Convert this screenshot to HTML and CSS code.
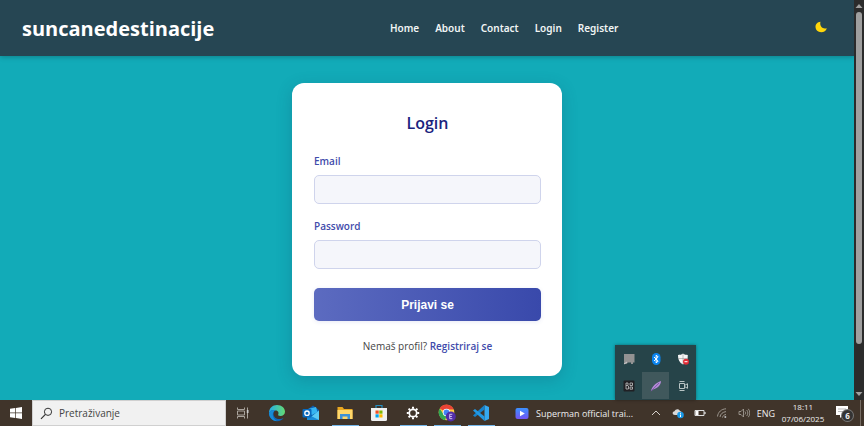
FILE: index.html
```html
<!DOCTYPE html>
<html lang="hr">
<head>
<meta charset="utf-8">
<title>suncanedestinacije – Login</title>
<link rel="stylesheet" href="styles.css">
</head>
<body>
<div class="window">
  <div class="page">
    <header class="header">
      <div class="brand">suncanedestinacije</div>
      <nav class="nav">
        <a href="#">Home</a><a href="#">About</a><a href="#">Contact</a><a href="#">Login</a><a href="#">Register</a>
      </nav>
      <button class="theme" type="button" aria-label="Dark mode">
        <svg width="12" height="12" viewBox="0 0 12 12"><path d="M5.500 .8C2.300 1 .4 3.200 .5 6c.1 3 2.500 5.200 5.700 5.200 2.800 0 4.900-1.400 5.600-4-2.200.6-4.300.2-5.500-1.400C5.200 4.400 5 2.500 5.500 .8z" fill="#ffd60a"/></svg>
      </button>
    </header>
    <main class="main">
      <form class="card">
        <h1>Login</h1>
        <label for="email">Email</label>
        <input id="email" type="email">
        <label for="password">Password</label>
        <input id="password" type="password">
        <button class="submit" type="button">Prijavi se</button>
        <p>Nemaš profil? <a href="#">Registriraj se</a></p>
      </form>
    </main>
  </div>
  <div class="scrollbar">
    <svg width="8" height="12" viewBox="0 0 8 12"><path d="M4 4l3.500 4h-7z" fill="#a0a0a0"/></svg>
    <div class="thumb"></div>
    <svg width="8" height="12" viewBox="0 0 8 12"><path d="M4 8l3.500-4h-7z" fill="#a0a0a0"/></svg>
  </div>
  <div class="tray">
    <span><svg width="12" height="12" viewBox="0 0 12 12"><path d="M1 1h10.500v8.500H10V11H8V9.500H5L3.500 11H1z" fill="#929292"/><path d="M1 11l3-2" stroke="#ccc"/></svg></span>
    <span><svg width="12" height="12" viewBox="0 0 12 12"><rect x="2" y="0" width="8.500" height="12" rx="4.200" fill="#0a84f0"/><path d="M4 4l4.200 4L6.200 10V2l2 2L4 8" fill="none" stroke="#fff"/></svg></span>
    <span><svg width="12" height="12" viewBox="0 0 12 12"><path d="M6 .5c1.500 1.200 3 1.400 4.800 1.400C11 6.500 9.500 9.500 6 11.500 2.500 9.500.8 6.500 1 1.900 3 1.900 4.500 1.700 6 .5z" fill="#f5f5f5"/><path d="M6 1v10M1 5.500h10" stroke="#888" stroke-width=".5"/><circle cx="9" cy="8.700" r="3" fill="#e02b35"/><path d="M7.500 8.700h3" stroke="#fff"/></svg></span>
    <span><svg width="12" height="12" viewBox="0 0 12 12"><rect x=".5" y=".5" width="11" height="11" rx="1" fill="#202024"/><path d="M3 3v6M3 3h2v2.500H3M5.500 6v3H3M7 3h2.500v2.500H7zM7 7h2.500v2.200H7z" fill="none" stroke="#c5c5c5" stroke-width=".8"/></svg></span>
    <span class="active"><svg width="12" height="12" viewBox="0 0 12 12"><path d="M1 11.200C1.600 7 6 2.500 11 1c0 4-3.800 7.600-8 8.500z" fill="#b58ad8"/><path d="M1 11.200L9 3" stroke="#77509a" stroke-width=".8"/></svg></span>
    <span><svg width="12" height="12" viewBox="0 0 12 12"><path d="M2.500 1.500h5M2.500 10.500h5M2.500 3.500h5v5h-5zM7.500 5.500l3-1.800v4.600l-3-1.800" fill="none" stroke="#b8c4c4"/></svg></span>
  </div>
</div>
<footer class="taskbar">
  <button class="start" type="button" aria-label="Start"><svg width="12" height="12" viewBox="0 0 12 12"><path d="M0 1.700L5.200 1v4.600H0zM5.900.9L12 0v5.600H5.900zM0 6.300h5.200V11L0 10.200zM5.900 6.300H12V12l-6.100-.9z" fill="#fff"/></svg></button>
  <label class="search"><svg width="13" height="13" viewBox="0 0 13 13"><circle cx="8" cy="4.800" r="3.600" fill="none" stroke="#333"/><path d="M5.400 7.400L1 11.800" stroke="#333" stroke-width="1.200"/></svg><input type="text" placeholder="Pretraživanje" aria-label="Pretraživanje"></label>
  <div class="apps">
    <button type="button" aria-label="Task view"><svg width="14" height="14" viewBox="0 0 14 14"><path d="M1.500 1.500v2h7v-2M1.500 5h7v4h-7zM1.500 12.500v-2h7v2M11.500 1.500v11" fill="none" stroke="#aaa49d"/><path d="M10.800 4h1.700v3h-1.700z" fill="#ccc"/></svg></button>
    <button type="button" aria-label="Edge"><svg width="18" height="18" viewBox="0 0 18 18"><defs><linearGradient id="edge" x1="0" x2="1"><stop stop-color="#23aee8"/><stop offset="1" stop-color="#65db72"/></linearGradient></defs><path d="M1 9C1 4 4.500 1 9 1c4.800 0 8 3.200 8 6.700 0 2.600-2 4.300-4.500 4.300-2 0-2.800-.8-2.300-1.500.7-1.200.5-4-2.700-4C4 6.500 1.500 8 1 9z" fill="url(#edge)"/><path d="M1 9c1-2.300 3.500-3.500 6-2.600-2 1.200-2.500 6 1.500 8 2.700 1.300 5.500.3 7.200-.7-1.500 2.200-3.700 3.500-6.700 3.500C4.300 17.200 1 13.600 1 9z" fill="#0c67bc"/><path d="M7 6.400c-3.500 2-3 7.500 2 10.700C4.600 17 1 13.600 1 9c1-2.300 3.500-3.500 6-2.600z" fill="#188bd5"/></svg></button>
    <button type="button" aria-label="Outlook"><svg width="18" height="16" viewBox="0 0 18 16"><path d="M5 5l6-4.500L17 5v9.500H5z" fill="#0f5eae"/><path d="M6 4l8-2 1.500 5L10 10 6 8z" fill="#36b5f2"/><path d="M17 5.500V15H5z" fill="#59c9f5"/><path d="M5 9l12 6H5z" fill="#198bd8"/><rect x=".5" y="4" width="9" height="8.500" rx="1" fill="#0869bd"/><circle cx="5" cy="8.200" r="2.200" fill="none" stroke="#fff" stroke-width="1.300"/></svg></button>
    <button class="open" type="button" aria-label="Explorer"><svg width="16" height="14" viewBox="0 0 16 14"><path d="M.5 1h5l1.500 2h8.500v10H.5z" fill="#e9a720"/><path d="M.5 4h15v9H.5z" fill="#ffd76a"/><path d="M3 13V8h10v5h-2.500v-2.500h-5V13z" fill="#3e91d6"/></svg></button>
    <button type="button" aria-label="Store"><svg width="18" height="18" viewBox="0 0 18 18"><path d="M6 5V1.500h6V5" fill="none" stroke="#258fc2" stroke-width="1.200"/><path d="M1 4h16v11.500a1.500 1.500 0 0 1-1.500 1.500h-13A1.500 1.500 0 0 1 1 15.500z" fill="#f1f1f1"/><path d="M5.500 6.500h3.200v3.200H5.500z" fill="#f25022"/><path d="M9.300 6.500h3.200v3.200H9.300z" fill="#7fba00"/><path d="M5.500 10.300h3.200v3.200H5.500z" fill="#00a4ef"/><path d="M9.300 10.300h3.200v3.200H9.300z" fill="#ffb900"/></svg></button>
    <button class="open" type="button" aria-label="Settings"><svg width="14" height="14" viewBox="0 0 14 14"><circle cx="7" cy="7" r="3.700" fill="none" stroke="#fff" stroke-width="1.700"/><path d="M7 .8v2M7 11.200v2M.8 7h2M11.200 7h2M2.600 2.600L4 4M10 10l1.400 1.400M11.400 2.600L10 4M4 10l-1.400 1.400" stroke="#fff" stroke-width="2"/></svg></button>
    <button class="open" type="button" aria-label="Chrome"><svg width="18" height="18" viewBox="0 0 18 18"><circle cx="8.500" cy="8.500" r="7.800" fill="#ffcd40"/><path d="M8.500 8.500L1.700 4.600A7.800 7.800 0 0 1 15.800 5.500H8.500z" fill="#e94335"/><path d="M1.700 4.600l3.900 6 3 .7-1.500 4.900A7.800 7.800 0 0 1 1.700 4.600z" fill="#32a853"/><circle cx="8.500" cy="8.500" r="3.700" fill="#fff"/><circle cx="8.500" cy="8.500" r="2.900" fill="#4285f4"/><circle cx="12.800" cy="12.500" r="5" fill="#512da8"/><path d="M14.300 10.300h-2.600v4.400h2.600M11.700 12.500h2.200" fill="none" stroke="#d9cdf5" stroke-width=".9"/></svg></button>
    <button class="open" type="button" aria-label="Code"><svg width="18" height="18" viewBox="0 0 18 18"><path d="M12.500 1L17 3v12l-4.500 2z" fill="#35a9f0"/><path d="M12.500 1v4.500L3 13 1 11.400z" fill="#1682cb"/><path d="M12.500 17v-4.500L3 5 1 6.600z" fill="#2299e4"/></svg></button>
  </div>
  <button class="news" type="button"><svg width="14" height="13" viewBox="0 0 14 13"><defs><linearGradient id="play" x2="0" y2="1"><stop stop-color="#3c91ff"/><stop offset="1" stop-color="#7254f4"/></linearGradient></defs><rect x=".5" y="1" width="13" height="11" rx="2" fill="url(#play)"/><path d="M5 3.700l4.800 2.800L5 9.300z" fill="#fff"/></svg><span>Superman official trai...</span></button>
  <div class="status">
    <span><svg width="10" height="8" viewBox="0 0 10 8"><path d="M1 6l4-4 4 4" fill="none" stroke="#d5d0ca"/></svg></span>
    <span><svg width="12" height="12" viewBox="0 0 12 12"><path d="M3 8C0 8 0 4.500 2.500 4.300 3.500 1.500 7 1.500 8 4c2.500 0 2.500 4 0 4z" fill="#d8d8d8"/><circle cx="8.500" cy="8" r="3.300" fill="#1899e8"/><path d="M8.500 7.500V10M8.500 5.800v1" stroke="#fff"/></svg></span>
    <span><svg width="12" height="8" viewBox="0 0 12 8"><path d="M1 1.500h9v5H1z" fill="none" stroke="#ddd"/><path d="M1.500 2h3v4h-3zM10.500 3h1v2h-1z" fill="#fff"/></svg></span>
    <span><svg width="12" height="12" viewBox="0 0 12 12"><path d="M1.500 9.500C2 5 5.500 2 10 1.800M4 10c.3-3 2.800-5 6-5.400M6.500 10.500c.3-1.600 1.600-2.800 3.500-3" fill="none" stroke="#9c968e"/><circle cx="9.300" cy="10" r="1" fill="#bbb"/></svg></span>
    <span><svg width="12" height="12" viewBox="0 0 12 12"><path d="M1 4.500h2l2.500-2.500v8L3 7.500H1zM7 4.500c.8.800.8 2.200 0 3M8.700 3c1.500 1.700 1.500 4.300 0 6M10.300 1.800c2 2.500 2 5.900 0 8.400" fill="none" stroke="#aaa49d" stroke-width=".8"/></svg></span>
    <span class="lang">ENG</span>
    <div class="clock"><time>18:11</time><time>07/06/2025</time></div>
    <button class="notice" type="button" aria-label="6 notifications"><svg width="12" height="12" viewBox="0 0 12 12"><path d="M0 0h12v9H7l-3 3V9H0z" fill="#fff"/><path d="M2 3h8M2 5.500h8" stroke="#999" stroke-width=".7"/></svg><b>6</b></button>
    <i class="desktop"></i>
  </div>
</footer>
</body>
</html>
```

FILE: styles.css
```css
* { box-sizing: border-box; }

body {
  margin: 0;
  height: 100vh;
  display: flex;
  flex-direction: column;
  overflow: hidden;
  font-family: "Open Sans", "Noto Sans", sans-serif;
  font-size: 10px;
}

a { text-decoration: none; }
svg { display: block; flex: none; }
button { border: 0; padding: 0; background: none; font: inherit; color: inherit; }

.window { position: relative; flex: 1; min-height: 0; display: flex; }
.page { flex: 1; display: flex; flex-direction: column; background: #12abb8; }

.header {
  display: flex;
  align-items: center;
  justify-content: space-between;
  height: 56px;
  padding: 0 22px;
  background: #264653;
  color: #fff;
  box-shadow: 0 1px 5px rgba(0, 0, 0, .25);
}
.brand { font-size: 20px; font-weight: 700; }
.nav { display: flex; gap: 16px; }
.nav a { color: #f1f5f5; font-family: "Noto Sans", sans-serif; font-weight: 600; }
.theme { display: flex; justify-content: center; width: 38px; padding-left: 16px; padding-bottom: 3px; }

.main { flex: 1; display: flex; justify-content: center; align-items: flex-start; padding-top: 27px; }
.card {
  display: flex;
  flex-direction: column;
  width: 270px;
  padding: 28px 21px 22px 22px;
  border-radius: 12px;
  background: #fff;
  box-shadow: 0 4px 16px rgba(20, 60, 90, .22);
}
.card h1 { margin: 0 0 19px; font-size: 16px; line-height: 24px; font-weight: 600; text-align: center; color: #1a237e; }
.card label { margin-bottom: 7px; line-height: 14px; font-weight: 600; color: #3f4bab; }
.card input {
  height: 29px;
  margin: 0 0 15px;
  padding: 0 8px;
  border: 1px solid #cfd4ec;
  border-radius: 5px;
  background: #f5f6fb;
  font: inherit;
}
.submit {
  height: 33px;
  margin-top: 4px;
  border-radius: 5px;
  background: linear-gradient(90deg, #5c6bc0, #3949ab);
  box-shadow: 0 1px 4px rgba(57, 73, 171, .12);
  color: #fff;
  font: bold 12px "Liberation Sans", sans-serif;
}
.card p { margin: 17px 0 0; line-height: 16px; text-align: center; color: #444; }
.card p a { color: #3f4bab; font-weight: 600; }

.scrollbar { width: 10px; display: flex; flex-direction: column; align-items: center; background: #2b2b2b; }
.thumb { width: 6px; height: 83%; margin-bottom: auto; border-radius: 3px; background: #9f9f9f; }

.tray {
  position: absolute;
  right: 168px;
  bottom: 0;
  display: grid;
  grid-template-columns: repeat(3, 27px);
  grid-auto-rows: 27px;
  padding-bottom: 1px;
  background: #264449;
  box-shadow: 0 0 3px rgba(0, 0, 0, .4);
}
.tray span { display: grid; place-items: center; }
.tray .active { background: #40585c; }

.taskbar { display: flex; height: 26px; background: #40342a; color: #eee; font-size: 9px; }
.start { width: 32px; display: grid; place-items: center; }
.search { display: flex; align-items: center; gap: 6px; width: 194px; padding-left: 7px; background: #f1f1f1; border: 1px solid #d0d0d0; }
.search input { flex: 1; min-width: 0; border: 0; padding: 0; background: none; outline: 0; font: 10px "Open Sans", sans-serif; }
.search input::placeholder { color: #444; opacity: 1; }
.apps { display: flex; }
.apps button { display: grid; place-items: center; width: 34px; }
.apps .open { background: linear-gradient(#76b9ed, #76b9ed) center bottom / 27px 1px no-repeat; }
.news { display: flex; align-items: center; gap: 7px; padding-left: 17px; white-space: nowrap; }
.status { display: flex; align-items: center; margin-left: auto; }
.status > span { display: grid; place-items: center; width: 22px; }
.status > .lang { width: 22px; font-size: 9px; }
.clock { display: flex; flex-direction: column; align-items: center; width: 52px; font-size: 8px; line-height: 12px; }
.notice { position: relative; width: 28px; padding: 0 0 3px 7px; }
.notice b {
  position: absolute;
  left: 13px;
  top: 4px;
  width: 11px;
  height: 11px;
  border-radius: 50%;
  background: #333;
  box-shadow: 0 0 0 1px #777;
  font-size: 8px;
  line-height: 11px;
  text-align: center;
}
.desktop { width: 4px; height: 26px; margin-left: 3px; border-left: 1px solid #776d64; }
```
